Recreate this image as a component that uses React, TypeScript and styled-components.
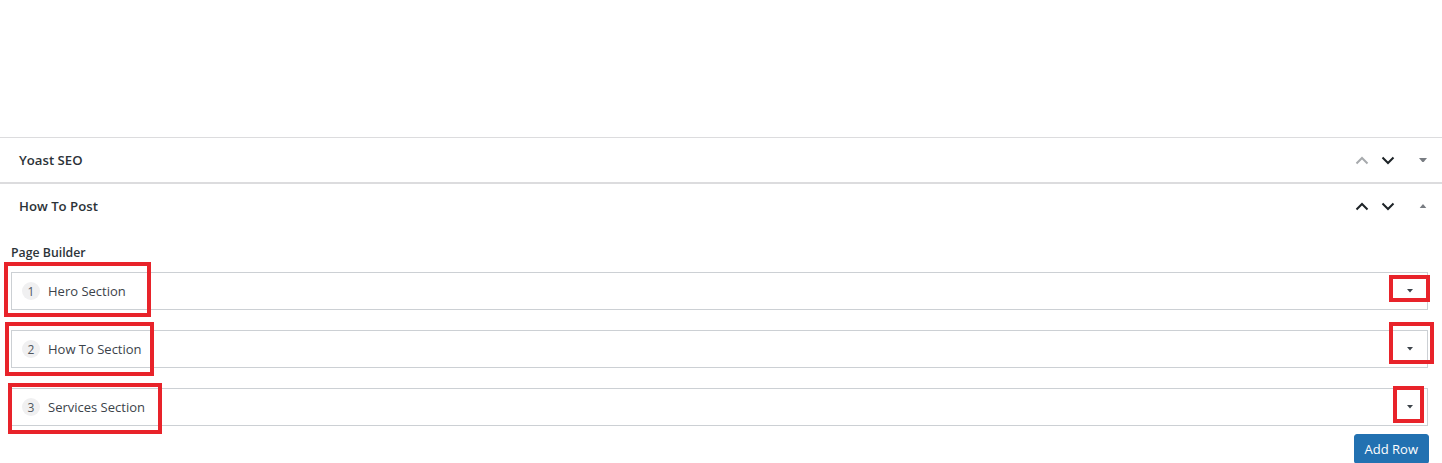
import * as React from 'react';
import styled, { createGlobalStyle } from 'styled-components';

const GlobalStyle = createGlobalStyle`
  html, body {
    margin: 0;
    padding: 0;
    background: #fff;
  }
  body {
    font-family: 'Open Sans', 'Noto Sans', sans-serif;
    color: #1d2327;
  }
`;

const Page = styled.div`
  position: relative;
  width: 1442px;
  height: 463px;
  overflow: hidden;
  background: #fff;
`;

const TopSpace = styled.div`
  height: 137px;
`;

const Postbox = styled.div<{ last?: boolean }>`
  border-top: 1px solid #dcdcde;
  border-bottom: ${p => (p.last ? 'none' : '1px solid #dcdcde')};
`;

const PostboxHeader = styled.div`
  display: flex;
  align-items: center;
  height: 44px;
  padding: 0 3px 0 19px;
`;

const PostboxTitle = styled.h2`
  flex: 1;
  margin: 0;
  font-size: 13.2px;
  font-weight: 600;
  color: #2c3338;
`;

const HandleActions = styled.div`
  display: flex;
  align-items: center;
`;

const HandleButton = styled.span<{ muted?: boolean }>`
  display: flex;
  align-items: center;
  justify-content: center;
  width: 26px;
  height: 20px;
  color: ${p => (p.muted ? '#a7aaad' : '#1d2327')};
`;

const ToggleButton = styled.span`
  display: flex;
  align-items: center;
  justify-content: center;
  width: 32px;
  height: 20px;
  margin-left: 6px;
  color: #787c82;
`;

const Inside = styled.div`
  padding: 17px 14px 0 11px;
`;

const FieldLabel = styled.label`
  display: block;
  font-size: 12.3px;
  font-weight: 600;
  line-height: 16px;
  color: #2c3338;
`;

const Layouts = styled.div`
  display: flex;
  flex-direction: column;
  gap: 20px;
  margin-top: 11px;
`;

const Layout = styled.div`
  display: flex;
  align-items: center;
  height: 36px;
  border: 1px solid #ccd0d4;
  background: #fff;
  padding: 0 12px 0 10px;
`;

const Order = styled.span`
  display: inline-flex;
  align-items: center;
  justify-content: center;
  width: 18px;
  height: 18px;
  border-radius: 50%;
  background: #f0f0f1;
  font-size: 12px;
  color: #50575e;
`;

const LayoutName = styled.span`
  flex: 1;
  margin-left: 8px;
  font-size: 13px;
  color: #3c434a;
`;

const LayoutToggle = styled.span`
  display: flex;
  align-items: center;
  justify-content: center;
  width: 10px;
  color: #3c434a;
`;

const Actions = styled.div`
  display: flex;
  justify-content: flex-end;
  margin-top: 8px;
`;

const PrimaryButton = styled.button`
  height: 30px;
  padding: 0 10px;
  margin-right: -1px;
  border: 1px solid #2271b1;
  border-radius: 3px;
  background: #2271b1;
  color: #fff;
  font-family: inherit;
  font-size: 13px;
`;

const Highlight = styled.div`
  position: absolute;
  border: 4px solid #e8232a;
  box-sizing: border-box;
  pointer-events: none;
`;

const ChevronUp = () => (
  <svg width="14" height="9" viewBox="0 0 14 9">
    <path d="M1.5 7.5 L7 2 L12.5 7.5" fill="none" stroke="currentColor" strokeWidth="2" />
  </svg>
);

const ChevronDown = () => (
  <svg width="14" height="9" viewBox="0 0 14 9">
    <path d="M1.5 1.5 L7 7 L12.5 1.5" fill="none" stroke="currentColor" strokeWidth="2" />
  </svg>
);

const Caret = ({ up, size = 8 }: { up?: boolean; size?: number }) => (
  <svg width={size} height={size * 0.6} viewBox="0 0 10 6">
    <path d={up ? 'M0 6 L5 0 L10 6 Z' : 'M0 0 L10 0 L5 6 Z'} fill="currentColor" />
  </svg>
);

const rows = ['Hero Section', 'How To Section', 'Services Section'];

// annotation boxes drawn on top of the screenshot
const marks = [
  { left: 4, top: 262, width: 147, height: 55 },
  { left: 5, top: 322, width: 149, height: 54 },
  { left: 8, top: 383, width: 154, height: 51 },
  { left: 1389, top: 275, width: 41, height: 27 },
  { left: 1389, top: 322, width: 45, height: 42 },
  { left: 1393, top: 386, width: 31, height: 37 },
];

export default function App() {
  return (
    <Page>
      <GlobalStyle />
      <TopSpace />
      <Postbox>
        <PostboxHeader>
          <PostboxTitle>Yoast SEO</PostboxTitle>
          <HandleActions>
            <HandleButton muted><ChevronUp /></HandleButton>
            <HandleButton><ChevronDown /></HandleButton>
            <ToggleButton><Caret /></ToggleButton>
          </HandleActions>
        </PostboxHeader>
      </Postbox>
      <Postbox last>
        <PostboxHeader>
          <PostboxTitle>How To Post</PostboxTitle>
          <HandleActions>
            <HandleButton><ChevronUp /></HandleButton>
            <HandleButton><ChevronDown /></HandleButton>
            <ToggleButton><Caret up /></ToggleButton>
          </HandleActions>
        </PostboxHeader>
        <Inside>
          <FieldLabel>Page Builder</FieldLabel>
          <Layouts>
            {rows.map((name, i) => (
              <Layout key={name}>
                <Order>{i + 1}</Order>
                <LayoutName>{name}</LayoutName>
                <LayoutToggle><Caret size={6} /></LayoutToggle>
              </Layout>
            ))}
          </Layouts>
          <Actions>
            <PrimaryButton>Add Row</PrimaryButton>
          </Actions>
        </Inside>
      </Postbox>
      {marks.map((m, i) => (
        <Highlight key={i} style={{ left: m.left, top: m.top, width: m.width, height: m.height }} />
      ))}
    </Page>
  );
}
